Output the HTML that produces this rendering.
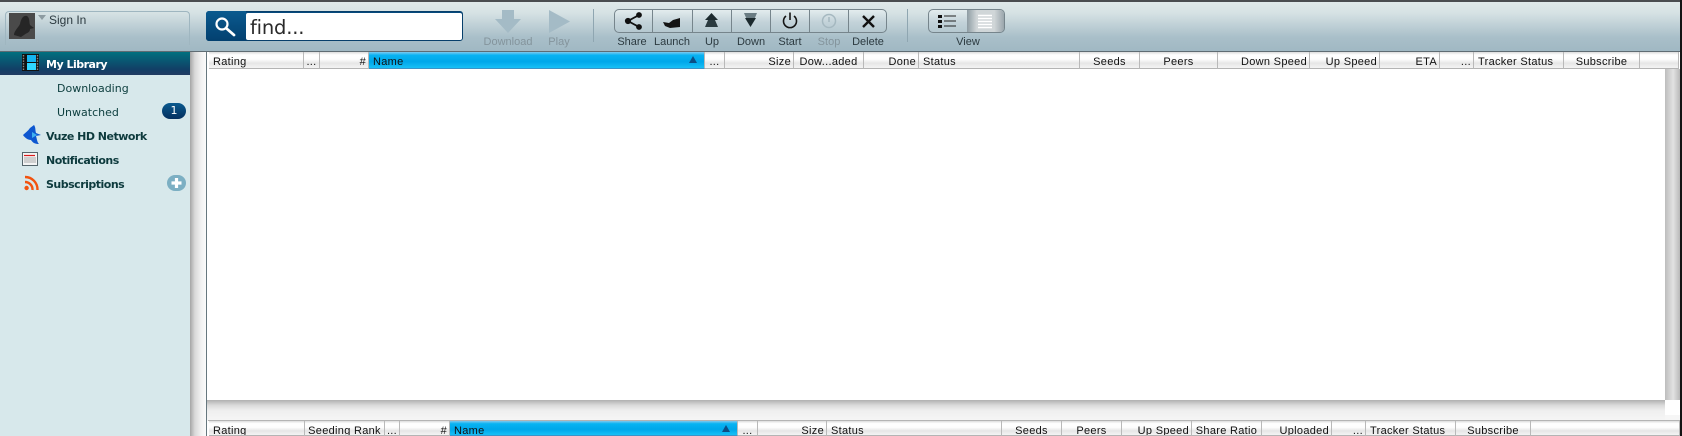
<!DOCTYPE html>
<html><head><meta charset="utf-8"><style>
html,body{margin:0;padding:0;background:#fff}
body{width:1682px;height:436px;position:relative;overflow:hidden;font-family:"Liberation Sans",sans-serif}
div,span,svg{position:absolute;box-sizing:border-box}
#tb{left:0;top:0;width:1680px;height:52px;background:linear-gradient(#dfe9ea 0,#d6e2e4 22%,#a9bfc9 72%,#a0b8c3 100%);border-top:2px solid #4a4d50;border-bottom:1px solid #5f6c73}
.l{font-size:11px;color:#2c3a40;white-space:nowrap;transform:translateX(-50%);top:36px}
.g{color:#84949c}
#side{left:0;top:52px;width:190px;height:384px;background:#d7e8eb}
#sel{left:0;top:52px;width:190px;height:23px;background:linear-gradient(#00707f,#123f66 75%,#213b62)}
.it{font:bold 11px "DejaVu Sans",sans-serif;letter-spacing:-.5px;color:#0d3a3d;white-space:nowrap;left:46px}
.sub{font:11px "DejaVu Sans",sans-serif;color:#0f4040;white-space:nowrap;left:57px}
.h{height:17px;background:linear-gradient(#dcdcdc 0,#fff 18%,#fdfdfd 45%,#e6e6e6 70%,#f4f4f4 100%);border-right:1px solid #b9b9b9;border-bottom:1px solid #b4b4b4;font-size:11px;letter-spacing:.3px;color:#111;line-height:20px;padding:0 4px;white-space:nowrap;overflow:hidden;text-align:left}
.b{height:15px}
.r{text-align:right;padding-right:2px}.c{text-align:center}
.n{background:linear-gradient(#7ec9f0 0,#08b3f2 20%,#00a7ea 60%,#17c0f6 100%);border-bottom:1px solid #3a93c8}
.tri{right:7px;top:4px;width:0;height:0;border-left:4px solid transparent;border-right:4px solid transparent;border-bottom:7px solid #0b4f86}
.sep{top:9px;width:1px;height:33px;background:#8fa6b1}
.d{top:9px;width:1px;height:24px;background:#76858c}
</style></head><body>
<div id="tb"></div>
<div style="left:5px;top:11px;width:185px;height:34px;border:1px solid #9fb6c0;border-bottom:none;border-radius:4px 4px 0 0"></div>
<div style="left:9px;top:13px;width:26px;height:26px;background:#4a4a4a"></div>
<svg style="left:9px;top:13px" width="26" height="26" viewBox="0 0 26 26"><path d="M5 22 C5 18 9 15 11 11 C12 6 14 2 18 3 C21 5 20 9 21 12 L25 15 L21 16 C21 20 17 20 15 22 L12 24 Z" fill="#262626"/></svg>
<div style="left:38px;top:15px;width:0;height:0;border-left:4px solid transparent;border-right:4px solid transparent;border-top:5px solid #8d9ba1"></div>
<span style="left:49px;top:13px;font-size:12px;color:#2c3a40;white-space:nowrap">Sign In</span>

<div style="left:206px;top:11px;width:257px;height:30px;background:#064a7d;border:1px solid #073f6b;border-radius:3px"></div>
<div style="left:206px;top:11px;width:40px;height:30px;background:linear-gradient(#0a5a8f,#03406f);border-radius:3px 0 0 3px"></div>
<div style="left:246px;top:13px;width:216px;height:27px;background:#fff;border-radius:2px"></div>
<svg style="left:214px;top:16px" width="22" height="21" viewBox="0 0 22 21"><circle cx="8" cy="8" r="5.5" fill="none" stroke="#fff" stroke-width="2.2"/><path d="M12.5 12.5 L20 19" stroke="#fff" stroke-width="2.8" stroke-linecap="round"/></svg>
<span style="left:250px;top:16px;font:19.5px 'DejaVu Sans',sans-serif;letter-spacing:-.2px;color:#2a2a2a;white-space:nowrap">find...</span>

<svg style="left:495px;top:10px" width="26" height="23" viewBox="0 0 26 23"><path d="M7 0 H19 V9 H26 L13 23 L0 9 H7 Z" fill="#a4bbc6"/></svg>
<svg style="left:549px;top:10px" width="21" height="23" viewBox="0 0 21 23"><path d="M0 0 L21 11.5 L0 23 Z" fill="#a4bbc6"/></svg>
<span class="l g" style="left:508px">Download</span>
<span class="l g" style="left:559px">Play</span>
<div class="sep" style="left:593px"></div>

<div style="left:614px;top:9px;width:273px;height:24px;border:1px solid #76858c;border-radius:5px;background:linear-gradient(#e3ecee,#c3d3d9 55%,#b5c8d0)"></div>
<div class="d" style="left:652px"></div><div class="d" style="left:692px"></div><div class="d" style="left:731px"></div><div class="d" style="left:770px"></div><div class="d" style="left:809px"></div><div class="d" style="left:848px"></div>
<svg style="left:614px;top:9px" width="273" height="24" viewBox="0 0 273 24">
<g stroke="#111" stroke-width="1.8" fill="#111"><path d="M25 6 L14 12 L25 18" fill="none"/><circle cx="25" cy="6" r="2"/><circle cx="14" cy="12" r="2.2"/><circle cx="25" cy="18" r="2"/></g>
<path d="M49 13 L55 14 L59 11 L66 9 L66 18 L56 19 L51 17 Z" fill="#141414"/>
<path d="M97.5 4 L104 11 H91 Z" fill="#1c2a2e"/><path d="M94 11 H101 L104 18 H91 Z" fill="#2b3b40"/>
<path d="M130 4 H143 L140 11 H133 Z" fill="#6a7c83"/><path d="M131 9 H142 L136.5 18 Z" fill="#1c2a2e"/>
<g fill="none" stroke="#151515" stroke-width="1.6"><path d="M172 7 A6.5 6.5 0 1 0 180 7"/><path d="M176 3.5 V11"/></g>
<g fill="none" stroke="#a5b8c0" stroke-width="1.5"><circle cx="215" cy="12" r="6.5"/><path d="M215 8 V13"/></g>
<path d="M249 7 L260 18 M260 7 L249 18" stroke="#111" stroke-width="2.4"/>
</svg>
<span class="l" style="left:632px">Share</span>
<span class="l" style="left:672px">Launch</span>
<span class="l" style="left:712px">Up</span>
<span class="l" style="left:751px">Down</span>
<span class="l" style="left:790px">Start</span>
<span class="l g" style="left:829px">Stop</span>
<span class="l" style="left:868px">Delete</span>
<div class="sep" style="left:907px"></div>

<div style="left:928px;top:9px;width:77px;height:24px;border:1px solid #76858c;border-radius:5px;background:linear-gradient(#e3ecee,#c3d3d9 55%,#b5c8d0);overflow:hidden"><div style="left:38px;top:0;width:39px;height:24px;background:linear-gradient(90deg,#8e9ca3,#d0d6d8 25%,#d0d6d8 70%,#8f9ca3)"></div></div>
<svg style="left:928px;top:9px" width="77" height="24" viewBox="0 0 77 24"><path d="M10 6 h4 v3 h-4z M10 11 h4 v3 h-4z M10 16 h4 v3 h-4z" fill="#111"/><path d="M16 7 H28 M16 12 H28 M16 17 H28" stroke="#222" stroke-width="1"/><path d="M50 6.5 H64 M50 9.5 H64 M50 12.5 H64 M50 15.5 H64 M50 18.5 H64" stroke="#fff" stroke-width="1.6"/></svg>
<span class="l" style="left:968px">View</span>

<div id="side"></div>
<div id="sel"></div>
<svg style="left:22px;top:53px" width="18" height="19" viewBox="0 0 18 19"><rect x="0" y="1" width="17" height="17" fill="#111"/><rect x="5" y="2" width="9" height="7" fill="#15b4ee"/><rect x="5" y="10" width="9" height="7" fill="#2fd6ff"/><path d="M1.5 2v15M15.5 2v15" stroke="#888" stroke-width="1.4" stroke-dasharray="1.5 1.2"/></svg>
<span class="it" style="top:58px;color:#fff">My Library</span>
<span class="sub" style="top:82px">Downloading</span>
<span class="sub" style="top:106px">Unwatched</span>
<div style="left:162px;top:103px;width:24px;height:16px;border-radius:8px;background:linear-gradient(#0a5a8e,#032f5f);color:#fff;font:11px 'DejaVu Sans',sans-serif;line-height:16px;text-align:center">1</div>
<svg style="left:22px;top:125px" width="20" height="20" viewBox="0 0 20 20"><path d="M12 0 C14 3 13 5 14 8 L19 10 L14 11 C15 14 15 17 17 19 C13 19 11 18 9 15 C6 15 3 13 1 10 C3 8 6 6 8 3 Z" fill="#0d57d0"/><path d="M10 7 L15 10 L10 13 Z" fill="#3fb0f0"/></svg>
<span class="it" style="top:130px">Vuze HD Network</span>
<svg style="left:22px;top:152px" width="18" height="15" viewBox="0 0 18 15"><rect x=".5" y=".5" width="15" height="13" fill="#f4f4f4" stroke="#56666c"/><path d="M2 3.5H13" stroke="#d91c1c" stroke-width="1.2"/><path d="M2 6H14M2 8H14M2 10H14" stroke="#aaa" stroke-width=".9"/></svg>
<span class="it" style="top:154px">Notifications</span>
<svg style="left:24px;top:175px" width="15" height="16" viewBox="0 0 15 16"><circle cx="2.6" cy="13" r="2.2" fill="#f2530f"/><path d="M1 7 A7.5 7.5 0 0 1 8.5 15 M1 2 A12.5 12.5 0 0 1 13.5 15" fill="none" stroke="#f2530f" stroke-width="2.4"/></svg>
<span class="it" style="top:178px">Subscriptions</span>
<div style="left:167px;top:175px;width:19px;height:16px;border-radius:8px;background:#7cafc3"></div>
<svg style="left:170px;top:176px" width="13" height="14" viewBox="0 0 13 14"><path d="M6.5 2V12M1.5 7H11.5" stroke="#fff" stroke-width="3.2"/></svg>

<div style="left:190px;top:52px;width:16px;height:384px;background:linear-gradient(90deg,#a5a5a5,#d8d8d8 30%,#f2f2f2 70%,#fbfbfb)"></div>
<div style="left:206px;top:52px;width:1px;height:384px;background:#66777e"></div>

<div class="h" style="left:209px;top:52px;width:95px">Rating</div>
<div class="h c" style="left:304px;top:52px;width:16px;padding:0">...</div>
<div class="h r" style="left:320px;top:52px;width:49px">#</div>
<div class="h n" style="left:369px;top:52px;width:336px">Name<span class="tri"></span></div>
<div class="h c" style="left:705px;top:52px;width:20px;padding:0">...</div>
<div class="h r" style="left:725px;top:52px;width:69px">Size</div>
<div class="h c" style="left:794px;top:52px;width:70px;padding:0">Dow...aded</div>
<div class="h r" style="left:864px;top:52px;width:55px">Done</div>
<div class="h" style="left:919px;top:52px;width:161px">Status</div>
<div class="h c" style="left:1080px;top:52px;width:60px">Seeds</div>
<div class="h c" style="left:1140px;top:52px;width:78px">Peers</div>
<div class="h r" style="left:1218px;top:52px;width:92px">Down Speed</div>
<div class="h r" style="left:1310px;top:52px;width:70px">Up Speed</div>
<div class="h r" style="left:1380px;top:52px;width:60px">ETA</div>
<div class="h r" style="left:1440px;top:52px;width:34px">...</div>
<div class="h" style="left:1474px;top:52px;width:90px">Tracker Status</div>
<div class="h c" style="left:1564px;top:52px;width:76px;padding:0">Subscribe</div>
<div class="h" style="left:1640px;top:52px;width:39px"></div>

<div style="left:1665px;top:69px;width:15px;height:331px;background:linear-gradient(90deg,#bdbdbd,#e2e2e2 55%,#b8b8b8)"></div>
<div style="left:207px;top:400px;width:1458px;height:21px;background:linear-gradient(#b0b0b0 0,#dadada 25%,#efefef 50%,#f6f6f6)"></div>
<div style="left:1665px;top:415px;width:15px;height:6px;background:#f6f6f6"></div>
<div style="left:208px;top:420px;width:1472px;height:1px;background:#b4b4b4"></div>

<div class="h b" style="left:209px;top:421px;width:96px">Rating</div>
<div class="h c b" style="left:305px;top:421px;width:80px;padding:0">Seeding Rank</div>
<div class="h c b" style="left:385px;top:421px;width:15px;padding:0">...</div>
<div class="h r b" style="left:400px;top:421px;width:50px">#</div>
<div class="h n b" style="left:450px;top:421px;width:288px">Name<span class="tri"></span></div>
<div class="h c b" style="left:738px;top:421px;width:20px;padding:0">...</div>
<div class="h r b" style="left:758px;top:421px;width:69px">Size</div>
<div class="h b" style="left:827px;top:421px;width:175px">Status</div>
<div class="h c b" style="left:1002px;top:421px;width:60px">Seeds</div>
<div class="h c b" style="left:1062px;top:421px;width:60px">Peers</div>
<div class="h r b" style="left:1122px;top:421px;width:70px">Up Speed</div>
<div class="h c b" style="left:1192px;top:421px;width:70px;padding:0">Share Ratio</div>
<div class="h r b" style="left:1262px;top:421px;width:70px">Uploaded</div>
<div class="h r b" style="left:1332px;top:421px;width:34px">...</div>
<div class="h b" style="left:1366px;top:421px;width:90px">Tracker Status</div>
<div class="h c b" style="left:1456px;top:421px;width:75px;padding:0">Subscribe</div>
<div class="h b" style="left:1531px;top:421px;width:149px"></div>

<div style="left:1680px;top:0;width:2px;height:436px;background:#141414"></div>
</body></html>
